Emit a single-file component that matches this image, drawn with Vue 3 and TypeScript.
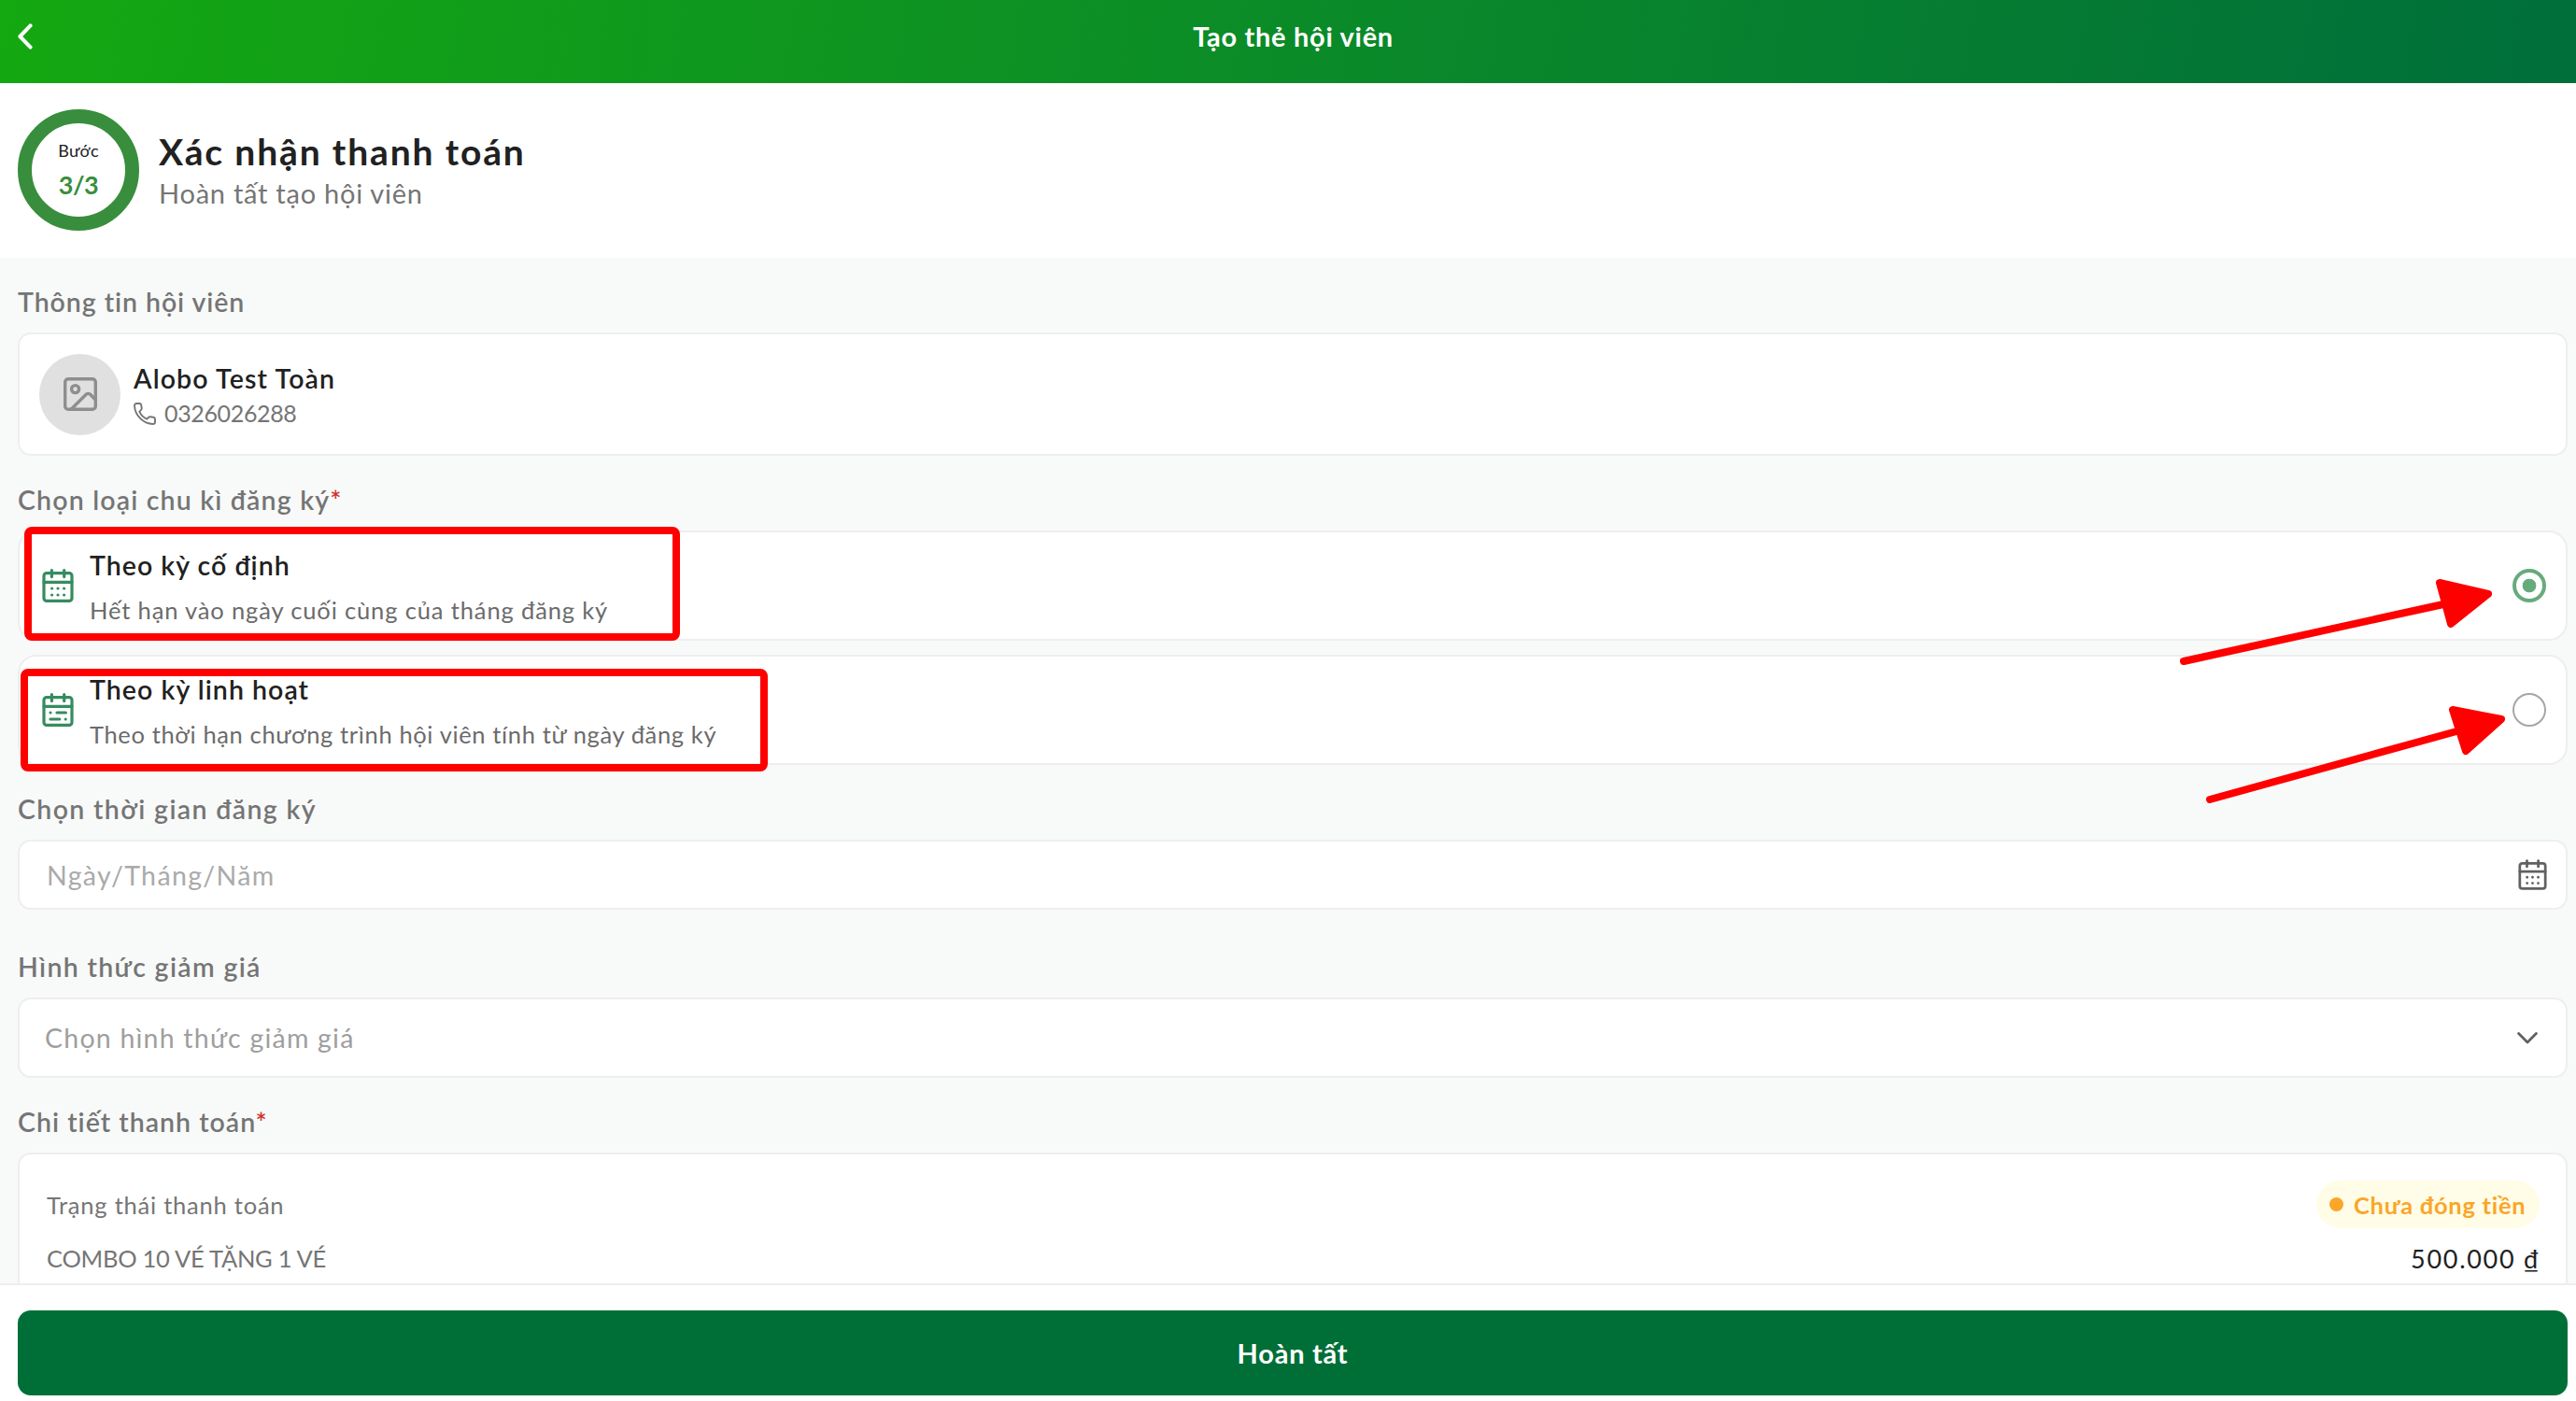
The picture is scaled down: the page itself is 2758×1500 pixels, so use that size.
<script setup lang="ts">
import { ref } from 'vue'

interface CycleOption {
  id: string
  title: string
  hint: string
  flexible: boolean
}

const options: CycleOption[] = [
  { id: 'fixed', title: 'Theo kỳ cố định', hint: 'Hết hạn vào ngày cuối cùng của tháng đăng ký', flexible: false },
  { id: 'flex', title: 'Theo kỳ linh hoạt', hint: 'Theo thời hạn chương trình hội viên tính từ ngày đăng ký', flexible: true },
]
const selected = ref('fixed')
</script>

<template>
  <div class="page">
    <header class="topbar">
      <svg class="back" viewBox="0 0 16 28" fill="none" stroke="#fff" stroke-width="4" stroke-linecap="round" stroke-linejoin="round">
        <path d="M13.6 2.4 2.4 14l11.2 11.6" />
      </svg>
      <h1 class="topbar-title">Tạo thẻ hội viên</h1>
    </header>

    <section class="step">
      <div class="ring">
        <span class="ring-label">Bước</span>
        <span class="ring-count">3/3</span>
      </div>
      <div class="step-text">
        <h2>Xác nhận thanh toán</h2>
        <p>Hoàn tất tạo hội viên</p>
      </div>
    </section>

    <main class="content">
      <h3 class="label l-info">Thông tin hội viên</h3>
      <div class="card member">
        <div class="avatar">
          <svg viewBox="0 0 36 36" fill="none" stroke="#8e8e8e" stroke-width="3.4" stroke-linecap="round" stroke-linejoin="round">
            <rect x="1.7" y="1.7" width="32.6" height="32.6" rx="3.4" />
            <circle cx="12.6" cy="12.6" r="4" />
            <path d="M8.4 34 24.2 18.3a3.2 3.2 0 0 1 4.4 0L34.3 24" />
          </svg>
        </div>
        <div class="member-text">
          <div class="member-name">Alobo Test Toàn</div>
          <div class="member-phone">
            <svg viewBox="0 0 24 24" fill="none" stroke="#757575" stroke-width="1.9" stroke-linejoin="round">
              <path d="M1 3.2C1 1.9 1.9 1 3.2 1h3.1c1 0 1.8.7 1.9 1.6l.5 3.4c.1.7-.1 1.3-.6 1.8L6.3 9.6c1.5 3.5 4.4 6.5 8 8l1.9-1.8c.5-.4 1.1-.6 1.7-.5l3.4.5c1 .1 1.7.9 1.7 1.9v3.1c0 1.3-.9 2.2-2.2 2.2C10.2 22.6 1.4 13.7 1 3.2Z" />
            </svg>
            <span>0326026288</span>
          </div>
        </div>
      </div>

      <h3 class="label l-cycle">Chọn loại chu kì đăng ký<i>*</i></h3>
      <div class="options">
        <div v-for="o in options" :key="o.id" class="card option" @click="selected = o.id">
          <svg class="cal green" viewBox="0 0 34 36" fill="none" stroke="currentColor" stroke-width="3.2" stroke-linecap="round" stroke-linejoin="round">
            <rect x="2" y="4.6" width="30" height="29.8" rx="3" />
            <path d="M2 14.3h30M10.4 1.6v7M23.7 1.6v7" />
            <path v-if="!o.flexible" class="dots" d="M10.6 21h.01M17 21h.01M23.6 21h.01M10.6 28h.01M17 28h.01M23.6 28h.01" />
            <path v-else class="dots" d="M9 21h.01M16 21h9.4M9 28h9.8M25.2 28h.01" />
          </svg>
          <div class="option-text">
            <div class="option-title" :class="o.id">{{ o.title }}</div>
            <div class="option-hint" :class="o.id">{{ o.hint }}</div>
          </div>
          <span class="radio" :class="{ on: selected === o.id }"></span>
        </div>
        <div class="mark mark-fixed"></div>
        <div class="mark mark-flex"></div>
        <svg class="arrows" width="380" height="270" viewBox="2320 600 380 270" fill="none" stroke="#f00" stroke-width="8" stroke-linecap="round" stroke-linejoin="round">
          <path d="M2338 708 2616 647M2366 856 2632 782.5" />
          <path fill="#f00" d="M2612 624 2664 636 2624 668ZM2626 760 2678 770 2640 804Z" />
        </svg>
      </div>

      <h3 class="label l-time">Chọn thời gian đăng ký</h3>
      <div class="card field date">
        <span class="ph-date">Ngày/Tháng/Năm</span>
        <svg class="cal grey" viewBox="0 0 34 36" fill="none" stroke="currentColor" stroke-width="3" stroke-linecap="round" stroke-linejoin="round">
          <rect x="2" y="4.6" width="30" height="29.8" rx="3" />
          <path d="M2 14.3h30M10.4 1.6v7M23.7 1.6v7" />
          <path class="dots" d="M10.6 21h.01M17 21h.01M23.6 21h.01M10.6 28h.01M17 28h.01M23.6 28h.01" />
        </svg>
      </div>

      <h3 class="label l-discount">Hình thức giảm giá</h3>
      <div class="card field select">
        <span class="ph-select">Chọn hình thức giảm giá</span>
        <svg class="chevron" viewBox="0 0 22 13" fill="none" stroke="#616161" stroke-width="2.8" stroke-linecap="round" stroke-linejoin="round">
          <path d="M1.6 1.6 11 11l9.4-9.4" />
        </svg>
      </div>

      <h3 class="label l-detail">Chi tiết thanh toán<i>*</i></h3>
      <div class="card detail">
        <div class="row row-status">
          <span class="row-name r-status">Trạng thái thanh toán</span>
          <span class="badge"><b></b><span>Chưa đóng tiền</span></span>
        </div>
        <div class="row row-item">
          <span class="row-name r-item">COMBO 10 VÉ TẶNG 1 VÉ</span>
          <span class="price">500.000 ₫</span>
        </div>
      </div>
    </main>

    <footer class="footer">
      <button class="submit" type="button">Hoàn tất</button>
    </footer>
  </div>
</template>

<style>
body {
  margin: 0;
}
</style>

<style scoped>
* {
  box-sizing: border-box;
}
.page {
  width: 100%;
  height: 1500px;
  display: flex;
  flex-direction: column;
  overflow: hidden;
  background: #f8faf9;
  font-family: Lato, 'Noto Sans', sans-serif;
  color: #212121;
}
h1,
h2,
h3,
p {
  margin: 0;
}
svg {
  display: block;
  flex: none;
}

.topbar {
  flex: none;
  height: 89px;
  padding: 0 9px 12px 19px;
  display: flex;
  align-items: center;
  background: linear-gradient(100deg, #14a811 0%, #0b8b28 50%, #006f3a 98%);
}
.back {
  width: 16px;
  height: 28px;
}
.topbar-title {
  flex: 1;
  margin-right: 15px;
  text-align: center;
  font-size: 29px;
  font-weight: 700;
  line-height: 40px;
  letter-spacing: 0.7px;
  color: #fff;
}

.step {
  flex: none;
  height: 187px;
  padding: 28px 19px 0;
  display: flex;
  gap: 21px;
  background: #fff;
}
.ring {
  width: 130px;
  height: 130px;
  border: 15px solid #388e3c;
  border-radius: 50%;
  display: flex;
  flex-direction: column;
  align-items: center;
}
.ring-label {
  margin-top: 17px;
  font-size: 18px;
  line-height: 24px;
  letter-spacing: 0.3px;
}
.ring-count {
  margin-top: 9px;
  font-size: 27px;
  font-weight: 700;
  line-height: 32px;
  letter-spacing: -0.4px;
  color: #388e3c;
}
.step-text {
  padding-top: 20px;
}
.step-text h2 {
  font-size: 39px;
  font-weight: 700;
  line-height: 50px;
  letter-spacing: 1.85px;
}
.step-text p {
  margin-top: 4px;
  font-size: 29px;
  line-height: 32px;
  letter-spacing: 0.75px;
  color: #757575;
}

.content {
  flex: 1;
  min-height: 0;
  overflow: hidden;
  padding: 0 9px 0 19px;
}
.label {
  margin: 27px 0 13px;
  height: 40px;
  font-size: 28.5px;
  font-weight: 600;
  line-height: 40px;
  color: #757575;
}
.label i {
  font-style: normal;
  color: #d32f2f;
}
.l-info {
  letter-spacing: 0.94px;
}
.l-cycle {
  letter-spacing: 1.18px;
}
.l-time {
  letter-spacing: 1.36px;
}
.l-discount {
  margin-top: 41px;
  letter-spacing: 1.34px;
}
.l-detail {
  letter-spacing: 1.02px;
}

.card {
  background: #fff;
  border: 2px solid #eee;
  border-radius: 14px;
  display: flex;
  align-items: center;
}
.member {
  height: 132px;
  padding-left: 21px;
}
.avatar {
  width: 87px;
  height: 87px;
  border-radius: 50%;
  background: #e0e0e0;
  display: flex;
  align-items: center;
  justify-content: center;
}
.avatar svg {
  width: 36px;
  height: 36px;
}
.member-text {
  margin-left: 14px;
  padding-top: 1px;
}
.member-name {
  font-size: 28.5px;
  font-weight: 600;
  line-height: 40px;
  letter-spacing: 1.13px;
}
.member-phone {
  display: flex;
  align-items: center;
  gap: 9px;
  font-size: 25px;
  line-height: 35px;
  letter-spacing: -0.35px;
  color: #757575;
}
.member-phone svg {
  width: 24px;
  height: 24px;
}

.options {
  position: relative;
  display: flex;
  flex-direction: column;
  gap: 15px;
}
.option {
  height: 118px;
  padding: 0 21px 0 24px;
  border-radius: 20px;
}
.cal {
  width: 34px;
  height: 36px;
}
.cal .dots {
  stroke-width: 3.2;
}
.green {
  color: #358c5f;
}
.grey {
  width: 31px;
  height: 33px;
  color: #616161;
}
.option-text {
  flex: 1;
  margin-left: 17px;
  padding-top: 4px;
}
.option-title {
  font-size: 28.5px;
  font-weight: 600;
  line-height: 40px;
}
.option-title.fixed {
  letter-spacing: 1.03px;
}
.option-title.flex {
  letter-spacing: 1.05px;
}
.option-hint {
  margin-top: 8px;
  font-size: 25.5px;
  line-height: 40px;
  color: #6b6b6b;
}
.option-hint.fixed {
  letter-spacing: 0.86px;
}
.option-hint.flex {
  letter-spacing: 0.63px;
}
.radio {
  width: 36px;
  height: 36px;
  border: 2px solid #a6a6a6;
  border-radius: 50%;
}
.radio.on {
  border: 4px solid #67ab7d;
  background: radial-gradient(circle, #67ab7d 0 7px, transparent 7.7px);
}

/* Highlights laid over the two cycle options */
.mark {
  position: absolute;
  border: 8px solid #f00;
  border-radius: 8px;
}
.mark-fixed {
  left: 7px;
  top: -4px;
  width: 702px;
  height: 122px;
}
.mark-flex {
  left: 3px;
  top: 148px;
  width: 800px;
  height: 110px;
}
.arrows {
  position: absolute;
  right: 49px;
  top: 32px;
}

.field {
  justify-content: space-between;
  font-size: 28.5px;
  line-height: 40px;
}
.date {
  height: 75px;
  padding: 0 20px 0 29px;
  color: #aaa;
}
.ph-date {
  letter-spacing: 1.35px;
}
.select {
  height: 86px;
  padding: 0 30px 0 27px;
  color: #9e9e9e;
}
.ph-select {
  letter-spacing: 1.22px;
}
.chevron {
  width: 22px;
  height: 13px;
}

.detail {
  height: 400px;
  padding: 28px 28px 0 29px;
  flex-direction: column;
  align-items: stretch;
}
.row {
  display: flex;
  align-items: center;
  justify-content: space-between;
}
.row-status {
  height: 51px;
}
.row-item {
  margin-top: 12px;
  height: 40px;
}
.row-name {
  font-size: 25.5px;
  color: #757575;
}
.r-status {
  letter-spacing: 0.77px;
}
.r-item {
  letter-spacing: -0.27px;
}
.badge {
  width: 239px;
  height: 51px;
  padding-left: 14px;
  border-radius: 26px;
  background: #fffde7;
  display: flex;
  align-items: center;
  gap: 11px;
  font-size: 25.5px;
  font-weight: 700;
  letter-spacing: 0.73px;
  color: #faa629;
  white-space: nowrap;
}
.badge b {
  width: 15px;
  height: 15px;
  border-radius: 50%;
  background: #faa629;
}
.price {
  font-size: 27px;
  letter-spacing: 1.7px;
  margin-right: -1px;
}

.footer {
  flex: none;
  height: 126px;
  padding: 27px 9px 0 19px;
  border-top: 2px solid #eee;
  background: #fff;
}
.submit {
  display: block;
  width: 100%;
  height: 91px;
  padding: 0;
  border: 0;
  border-radius: 14px;
  background: #006f37;
  color: #fff;
  font-family: inherit;
  font-size: 29px;
  font-weight: 700;
  letter-spacing: 0.75px;
}
</style>
